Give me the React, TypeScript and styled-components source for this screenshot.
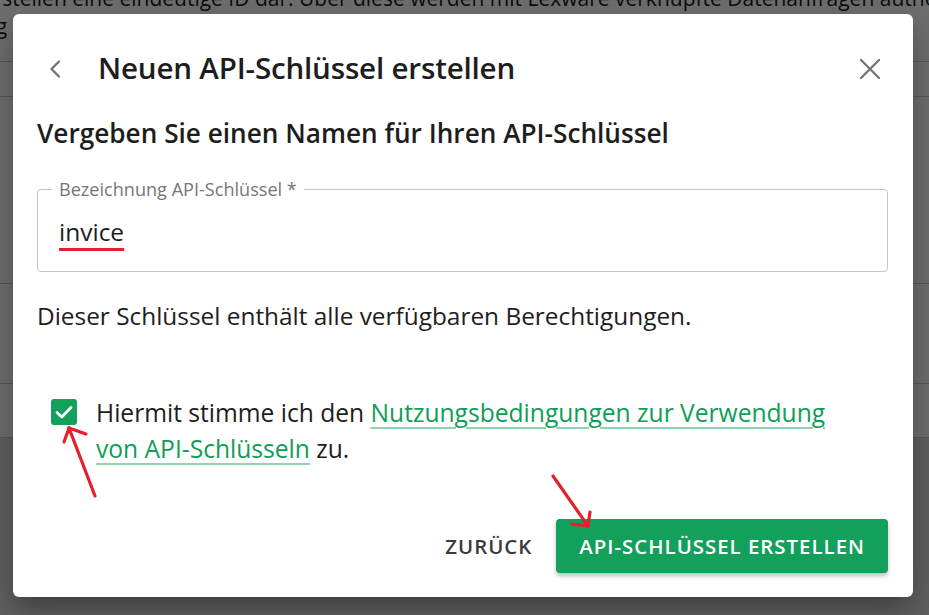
import React from 'react';
import styled, { createGlobalStyle } from 'styled-components';

const Global = createGlobalStyle`
  html, body { margin: 0; padding: 0; }
  body {
    font-family: "Open Sans", "Noto Sans", "Liberation Sans", sans-serif;
    background: #ffffff;
    overflow: hidden;
  }
  * { box-sizing: border-box; }
`;

const Screen = styled.div`
  position: relative;
  width: 929px;
  height: 615px;
  overflow: hidden;
  background: #ffffff;
`;

/* ---------- page behind the dialog ---------- */
const Page = styled.div`
  display: flex;
  flex-direction: column;
  height: 100%;
`;

const Intro = styled.div`
  height: 62px;
  border-bottom: 1px solid #c8c8c8;
  overflow: hidden;
`;

const IntroLine = styled.p<{ $shift: number }>`
  margin: 0 0 0 ${p => p.$shift}px;
  white-space: nowrap;
  font-size: 21px;
  line-height: 28px;
  color: #1c1c1c;
  &:first-child { margin-top: -16px; }
`;

const PageLink = styled.span`
  text-decoration: underline;
`;

const PageRow = styled.div<{ $h: number }>`
  height: ${p => p.$h}px;
  border-bottom: 1px solid #c8c8c8;
  background: #ffffff;
`;

const PageFooter = styled.div`
  flex: 1;
  background: #e2e2e2;
`;

/* ---------- overlay & dialog ---------- */
const Overlay = styled.div`
  position: absolute;
  inset: 0;
  background: rgba(0, 0, 0, 0.56);
  display: flex;
  align-items: flex-start;
  padding: 14px 0 0 13px;
`;

const Dialog = styled.div`
  width: 900px;
  background: #ffffff;
  border-radius: 6px;
  box-shadow: 0 11px 15px -7px rgba(0,0,0,0.2), 0 24px 38px 3px rgba(0,0,0,0.14), 0 9px 46px 8px rgba(0,0,0,0.12);
  padding: 27px 25px 24px 24px;
  display: flex;
  flex-direction: column;
`;

const Header = styled.div`
  display: flex;
  align-items: center;
  height: 56px;
  margin: 0 6px 0 11px;
`;

const IconButton = styled.button`
  border: 0;
  background: transparent;
  padding: 0;
  display: flex;
  align-items: center;
  justify-content: center;
  cursor: pointer;
  color: #757575;
`;

const Title = styled.h1`
  margin: -2px 0 0 36px;
  flex: 1;
  font-size: 29.6px;
  line-height: 36px;
  font-weight: 600;
  color: #1d1d1d;
  letter-spacing: -0.2px;
`;

const SubTitle = styled.h2`
  margin: 20px 0 0 0;
  font-size: 26.2px;
  line-height: 32px;
  font-weight: 600;
  color: #1d1d1d;
`;

const Field = styled.div`
  position: relative;
  margin-top: 40px;
  height: 83px;
  border: 1px solid #c4c4c4;
  border-radius: 4px;
  display: flex;
  align-items: center;
  padding: 2px 21px 0 21px;
`;

const FieldLabel = styled.span`
  position: absolute;
  top: -13px;
  left: 14px;
  padding: 0 7px;
  background: #ffffff;
  font-size: 18.1px;
  line-height: 24px;
  color: #767676;
`;

const FieldValue = styled.span`
  font-size: 24.5px;
  line-height: 30px;
  color: #1d1d1d;
  text-decoration: underline;
  text-decoration-color: #e0222e;
  text-decoration-thickness: 3px;
  text-underline-offset: 7px;
  text-decoration-skip-ink: none;
`;

const BodyText = styled.p`
  margin: 29px 0 0 0;
  font-size: 24.4px;
  line-height: 30px;
  color: #1d1d1d;
`;

const ConsentRow = styled.div`
  display: flex;
  align-items: flex-start;
  margin: 64px 0 0 14px;
  gap: 19px;
`;

const CheckBox = styled.span`
  flex: none;
  width: 26px;
  height: 26px;
  margin-top: 4px;
  border-radius: 3px;
  background: #12a05b;
  display: flex;
  align-items: center;
  justify-content: center;
`;

const ConsentText = styled.p`
  margin: 0;
  max-width: 750px;
  font-size: 24.6px;
  line-height: 36px;
  color: #1d1d1d;
`;

const TermsLink = styled.a`
  color: #0f9d57;
  text-decoration: underline;
  text-decoration-color: #8fd4b1;
  text-decoration-thickness: 1.5px;
  text-underline-offset: 5px;
`;

const Actions = styled.div`
  display: flex;
  justify-content: flex-end;
  align-items: center;
  gap: 12px;
  margin-top: 52px;
`;

const Button = styled.button<{ $primary?: boolean }>`
  border: 0;
  height: 54px;
  border-radius: 4px;
  font-family: inherit;
  font-size: 20.4px;
  font-weight: 600;
  letter-spacing: 1px;
  text-transform: uppercase;
  padding: ${p => (p.$primary ? '0 23px' : '0 12px')};
  color: ${p => (p.$primary ? '#ffffff' : '#3a3a3a')};
  background: ${p => (p.$primary ? '#12a05b' : 'transparent')};
  box-shadow: ${p => (p.$primary ? '0 3px 4px rgba(0,0,0,0.25)' : 'none')};
  cursor: pointer;
`;

const Annotations = styled.svg`
  position: absolute;
  left: 0;
  top: 0;
  pointer-events: none;
`;

export default function App() {
  return (
    <Screen>
      <Global />
      <Page>
        <Intro>
          <IntroLine $shift={-93}>
            Schlüssel stellen eine eindeutige ID dar. Über diese werden mit Lexware verknüpfte Datenanfragen authentifiziert.
          </IntroLine>
          <IntroLine $shift={-86}>
            <PageLink>Anleitung</PageLink> zur Nutzung der öffentlichen Schnittstelle finden Sie in der Dokumentation zur Anmeldung
          </IntroLine>
        </Intro>
        <PageRow $h={35} />
        <PageRow $h={187} />
        <PageRow $h={100} />
        <PageRow $h={54} />
        <PageFooter />
      </Page>

      <Overlay>
        <Dialog role="dialog" aria-labelledby="dlg-title">
          <Header>
            <IconButton aria-label="Zurück">
              <svg width="14" height="20" viewBox="0 0 14 20" fill="none">
                <polyline points="11,2.5 3.5,10 11,17.5" stroke="#757575" strokeWidth="2.4" strokeLinecap="round" strokeLinejoin="round" />
              </svg>
            </IconButton>
            <Title id="dlg-title">Neuen API-Schlüssel erstellen</Title>
            <IconButton aria-label="Schließen">
              <svg width="24" height="24" viewBox="0 0 24 24" fill="none">
                <path d="M3 3 L21 21 M21 3 L3 21" stroke="#757575" strokeWidth="2.4" strokeLinecap="round" />
              </svg>
            </IconButton>
          </Header>

          <SubTitle>Vergeben Sie einen Namen für Ihren API-Schlüssel</SubTitle>

          <Field>
            <FieldLabel>Bezeichnung API-Schlüssel *</FieldLabel>
            <FieldValue>invice</FieldValue>
          </Field>

          <BodyText>Dieser Schlüssel enthält alle verfügbaren Berechtigungen.</BodyText>

          <ConsentRow>
            <CheckBox role="checkbox" aria-checked="true">
              <svg width="18" height="14" viewBox="0 0 18 14" fill="none">
                <polyline points="2,7.5 6.8,12 16,2.5" stroke="#ffffff" strokeWidth="2.8" strokeLinecap="round" strokeLinejoin="round" />
              </svg>
            </CheckBox>
            <ConsentText>
              Hiermit stimme ich den{' '}
              <TermsLink href="#">Nutzungsbedingungen zur Verwendung von API-Schlüsseln</TermsLink> zu.
            </ConsentText>
          </ConsentRow>

          <Actions>
            <Button>Zurück</Button>
            <Button $primary>API-Schlüssel erstellen</Button>
          </Actions>
        </Dialog>
      </Overlay>

      <Annotations width="929" height="615" viewBox="0 0 929 615">
        <g stroke="#e5202d" strokeWidth="3.2" strokeLinecap="round" fill="none">
          <line x1="95" y1="496" x2="69" y2="428" />
          <line x1="69" y1="428" x2="64" y2="442" />
          <line x1="69" y1="428" x2="86" y2="434" />
          <line x1="553" y1="476" x2="588" y2="526" />
          <line x1="588" y1="526" x2="572" y2="524" />
          <line x1="588" y1="526" x2="590" y2="512" />
        </g>
      </Annotations>
    </Screen>
  );
}
